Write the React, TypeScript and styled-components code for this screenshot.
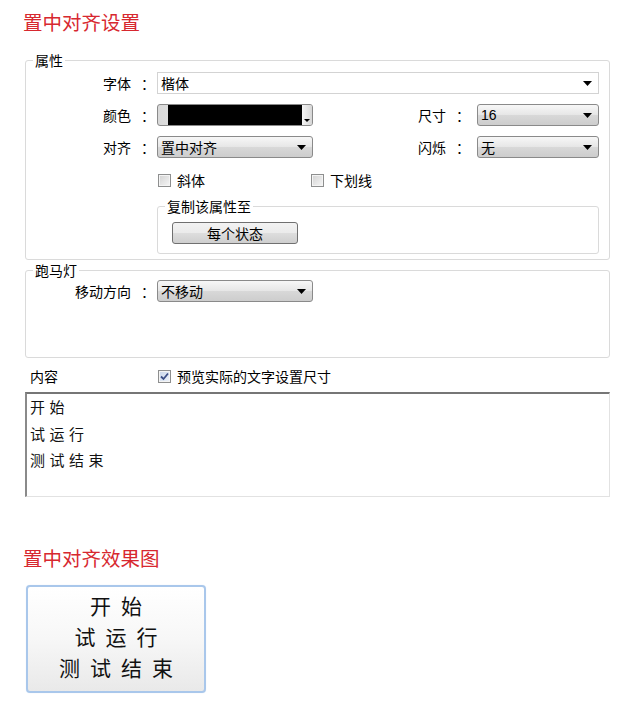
import styled, { createGlobalStyle } from "styled-components";

const GlobalStyle = createGlobalStyle`
  html, body {
    margin: 0;
    padding: 0;
    background: #fff;
  }

  body {
    color: #000;
    font-family: "Noto Sans CJK SC", "Noto Sans", sans-serif;
  }

  * {
    box-sizing: border-box;
  }
`;

const Page = styled.main`
  display: flex;
  width: 638px;
  flex-direction: column;
  padding: 10px 28px 24px 23px;
`;

const SectionTitle = styled.h2<{ $gap?: number }>`
  margin: ${({ $gap }) => $gap ?? 0}px 0 0;
  color: #d7282f;
  font-size: 19.5px;
  font-weight: 400;
  line-height: 24px;
  white-space: nowrap;
`;

const Group = styled.fieldset<{ $gap: number; $pad: string }>`
  min-width: 0;
  margin: ${({ $gap }) => $gap}px 0 0 2px;
  padding: ${({ $pad }) => $pad};
  border: 1px solid #dadada;
  border-radius: 3px;
`;

const GroupLegend = styled.legend`
  margin-left: 7px;
  padding: 0 2px;
  font-size: 14px;
  line-height: 16px;
  white-space: nowrap;
`;

const PropGrid = styled.div`
  display: grid;
  grid-template-columns: 131px 156px 164px 122px;
  row-gap: 10px;
  align-items: center;
`;

const FieldLabel = styled.span<{ $pad?: number }>`
  display: flex;
  justify-content: flex-end;
  padding-right: ${({ $pad }) => $pad ?? 7}px;
  font-size: 14px;
  line-height: 16px;
  white-space: nowrap;
`;

const Colon = styled.span`
  width: 9px;
  margin-left: 10px;
  overflow: visible;
  text-align: left;
`;

const Dropdown = styled.div<{ $flat?: boolean; $span?: string }>`
  display: flex;
  height: 22px;
  grid-column: ${({ $span }) => $span ?? "auto"};
  align-items: center;
  justify-content: space-between;
  padding: 0 6px 0 3px;
  border: 1px solid ${({ $flat }) => ($flat ? "#d3d3d3" : "#8a8a8a")};
  border-radius: ${({ $flat }) => ($flat ? "0" : "3px")};
  background: ${({ $flat }) =>
    $flat ? "#fff" : "linear-gradient(#f7f7f7, #e6e6e6 50%, #d8d8d8 51%, #cdcdcd)"};
  font-size: 14px;
  line-height: 16px;
  white-space: nowrap;
`;

const DigitText = styled.span`
  font-family: "Liberation Sans", "Noto Sans", sans-serif;
  font-size: 14px;
`;

const ColorPicker = styled.div`
  display: flex;
  height: 22px;
  overflow: hidden;
  padding-left: 10px;
  border: 1px solid #8a8a8a;
  border-radius: 3px;
  background: linear-gradient(90deg, #d9d9d9, #f7f7f7 45%, #dcdcdc);
`;

const Swatch = styled.span<{ $color: string }>`
  flex: 1;
  background: ${({ $color }) => $color};
`;

const ColorArrow = styled.span`
  display: flex;
  width: 10px;
  align-items: flex-end;
  justify-content: center;
  padding-bottom: 3px;
  background: linear-gradient(90deg, #f4f4f4, #d6d6d6);
`;

const CheckRow = styled.div`
  display: flex;
  grid-column: 2 / 5;
  margin-top: 4px;
  align-items: center;
`;

const CheckItem = styled.label<{ $width?: number }>`
  display: flex;
  width: ${({ $width }) => ($width ? `${$width}px` : "auto")};
  align-items: center;
  gap: 6px;
  font-size: 14px;
  line-height: 16px;
  white-space: nowrap;
`;

const CheckBox = styled.span<{ $checked?: boolean }>`
  display: inline-flex;
  width: 13px;
  height: 13px;
  margin-left: 1px;
  align-items: center;
  justify-content: center;
  border: 1px solid #8e8f8f;
  background: ${({ $checked }) =>
    $checked
      ? "linear-gradient(135deg, #c9d6ea, #eef3fa)"
      : "linear-gradient(135deg, #d2d2d2, #f6f6f6)"};
  box-shadow: inset 0 0 0 1px #f4f4f4;
`;

const CopyGroup = styled.fieldset`
  min-width: 0;
  grid-column: 2 / 5;
  margin: 0;
  padding: 8px 0 9px;
  border: 1px solid #dadada;
  border-radius: 3px;
`;

const StateButton = styled.button`
  display: block;
  width: 126px;
  height: 22px;
  margin-left: 14px;
  padding: 0;
  border: 1px solid #707070;
  border-radius: 3px;
  background: linear-gradient(#f3f3f3, #ebebeb 48%, #dddddd 52%, #cfcfcf);
  color: #000;
  font-family: inherit;
  font-size: 14px;
  line-height: 16px;
`;

const MarqueeRow = styled.div`
  display: grid;
  grid-template-columns: 131px 156px;
  align-items: center;
`;

const ContentHeader = styled.div`
  display: grid;
  grid-template-columns: 127px auto;
  margin-top: 10px;
  padding-left: 7px;
  align-items: center;
  font-size: 14px;
  line-height: 16px;
`;

const ContentBox = styled.textarea`
  display: block;
  width: 585px;
  height: 105px;
  margin: 8px 0 0 2px;
  padding: 0 3px;
  border-width: 2px 1px 1px 2px;
  border-style: solid;
  border-color: #767676 #e2e2e2 #e2e2e2 #8a8a8a;
  color: #111;
  font-family: "Noto Sans CJK SC", sans-serif;
  font-size: 15px;
  letter-spacing: 4.5px;
  line-height: 26.5px;
  resize: none;
  outline: none;
`;

const PreviewButton = styled.div`
  display: flex;
  width: 180px;
  height: 108px;
  margin: 15px 0 0 3px;
  flex-direction: column;
  align-items: center;
  justify-content: center;
  padding: 0 0 6px 10px;
  border: 2px solid #a9c7eb;
  border-radius: 4px;
  background: linear-gradient(#ffffff, #f7f7f7 50%, #e9e9e9);
  box-shadow: 0 0 1px #cfe0f5;
  color: #111;
  font-size: 21px;
  letter-spacing: 10px;
  line-height: 31px;
  white-space: nowrap;
`;

function Arrow({ small = false }: { small?: boolean }) {
  const w = small ? 6 : 9;
  const h = small ? 3 : 5;
  return (
    <svg width={w} height={h} viewBox={`0 0 ${w} ${h}`} aria-hidden="true">
      <polygon points={`0,0 ${w},0 ${w / 2},${h}`} fill="#000" />
    </svg>
  );
}

function Check({ checked = false }: { checked?: boolean }) {
  return (
    <CheckBox $checked={checked}>
      {checked && (
        <svg width="9" height="9" viewBox="0 0 9 9" aria-hidden="true">
          <path d="M1 4.5 L3.5 7 L8 1.5" fill="none" stroke="#3c4f86" strokeWidth="1.8" />
        </svg>
      )}
    </CheckBox>
  );
}

function Label({ text, pad }: { text: string; pad?: number }) {
  return (
    <FieldLabel $pad={pad}>
      {text}
      <Colon>：</Colon>
    </FieldLabel>
  );
}

const lines = ["开始", "试运行", "测试结束"];

export default function App() {
  return (
    <>
      <GlobalStyle />
      <Page>
        <SectionTitle>置中对齐设置</SectionTitle>

        <Group $gap={18} $pad="4px 10px 5px 0">
          <GroupLegend>属性</GroupLegend>
          <PropGrid>
            <Label text="字体" />
            <Dropdown $flat $span="2 / 5">
              楷体
              <Arrow />
            </Dropdown>

            <Label text="颜色" />
            <ColorPicker>
              <Swatch $color="#000" />
              <ColorArrow>
                <Arrow small />
              </ColorArrow>
            </ColorPicker>
            <Label text="尺寸" pad={12} />
            <Dropdown>
              <DigitText>16</DigitText>
              <Arrow />
            </Dropdown>

            <Label text="对齐" />
            <Dropdown>
              置中对齐
              <Arrow />
            </Dropdown>
            <Label text="闪烁" pad={12} />
            <Dropdown>
              无
              <Arrow />
            </Dropdown>

            <CheckRow>
              <CheckItem $width={153}>
                <Check />
                斜体
              </CheckItem>
              <CheckItem>
                <Check />
                下划线
              </CheckItem>
            </CheckRow>

            <CopyGroup>
              <GroupLegend>复制该属性至</GroupLegend>
              <StateButton type="button">每个状态</StateButton>
            </CopyGroup>
          </PropGrid>
        </Group>

        <Group $gap={2} $pad="2px 10px 55px 0">
          <GroupLegend>跑马灯</GroupLegend>
          <MarqueeRow>
            <Label text="移动方向" />
            <Dropdown>
              不移动
              <Arrow />
            </Dropdown>
          </MarqueeRow>
        </Group>

        <ContentHeader>
          <span>内容</span>
          <CheckItem>
            <Check checked />
            预览实际的文字设置尺寸
          </CheckItem>
        </ContentHeader>
        <ContentBox readOnly value={lines.join("\n")} />

        <SectionTitle $gap={49}>置中对齐效果图</SectionTitle>
        <PreviewButton>
          {lines.map((line) => (
            <span key={line}>{line}</span>
          ))}
        </PreviewButton>
      </Page>
    </>
  );
}
